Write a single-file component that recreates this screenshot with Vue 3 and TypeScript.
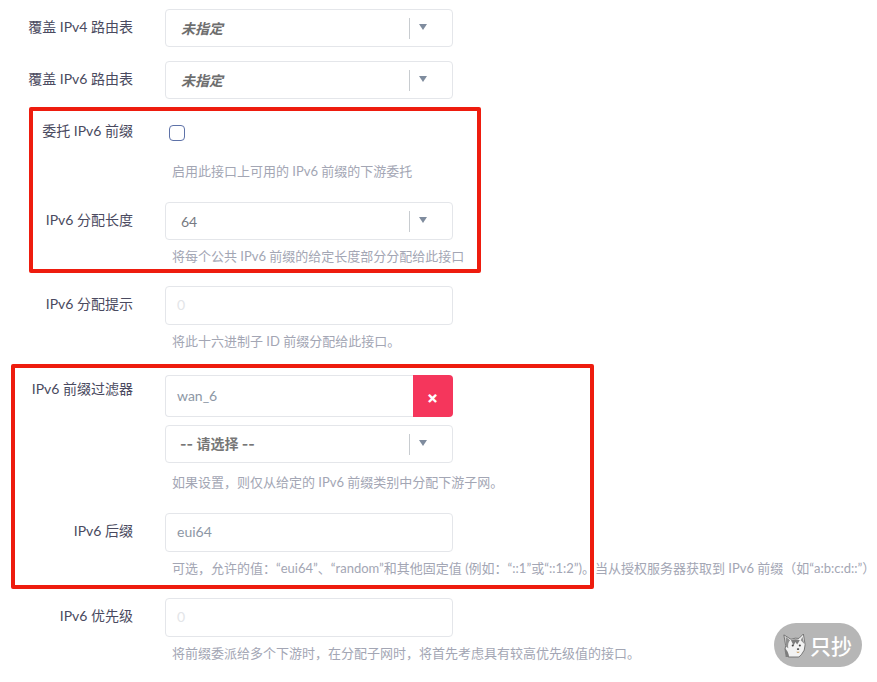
<script setup lang="ts">
const help = {
  delegate: '启用此接口上可用的 IPv6 前缀的下游委托',
  assign: '将每个公共 IPv6 前缀的给定长度部分分配给此接口',
}
</script>

<template>
  <div class="page">
    <div class="row gap14">
      <label class="label">覆盖 IPv4 路由表</label>
      <div class="control">
        <div class="select"><span class="val unset">未指定</span><span class="sep"></span><span class="tri"></span></div>
      </div>
    </div>
    <div class="row gap8">
      <label class="label">覆盖 IPv6 路由表</label>
      <div class="control">
        <div class="select"><span class="val unset">未指定</span><span class="sep"></span><span class="tri"></span></div>
      </div>
    </div>
    <div class="row gap21">
      <label class="label low">委托 IPv6 前缀</label>
      <div class="control">
        <span class="check"></span>
        <p class="help first">{{ help.delegate }}</p>
      </div>
    </div>
    <div class="row gap20">
      <label class="label">IPv6 分配长度</label>
      <div class="control">
        <div class="select"><span class="val">64</span><span class="sep"></span><span class="tri"></span></div>
        <p class="help">{{ help.assign }}</p>
      </div>
    </div>
    <div class="row gap24">
      <label class="label">IPv6 分配提示</label>
      <div class="control">
        <div class="input placeholder">0</div>
        <p class="help">将此十六进制子 ID 前缀分配给此接口。</p>
      </div>
    </div>
    <div class="row gap21">
      <label class="label high">IPv6 前缀过滤器</label>
      <div class="control">
        <div class="group">
          <div class="input tall">wan_6</div>
          <button class="remove" type="button">×</button>
        </div>
        <div class="select sel2"><span class="val pick">-- 请选择 --</span><span class="sep"></span><span class="tri"></span></div>
        <p class="help wide">如果设置，则仅从给定的 IPv6 前缀类别中分配下游子网。</p>
      </div>
    </div>
    <div class="row gap20">
      <label class="label">IPv6 后缀</label>
      <div class="control">
        <div class="input">eui64</div>
        <p class="help">可选，允许的值：“eui64”、“random”和其他固定值 (例如：“::1”或“::1:2”)。当从授权服务器获取到 IPv6 前缀（如“a:b:c:d::”）</p>
      </div>
    </div>
    <div class="row">
      <label class="label">IPv6 优先级</label>
      <div class="control">
        <div class="input placeholder">0</div>
        <p class="help">将前缀委派给多个下游时，在分配子网时，将首先考虑具有较高优先级值的接口。</p>
      </div>
    </div>

    <div class="mark mark-a"></div>
    <div class="mark mark-b"></div>

    <div class="badge">
      <svg class="dog" width="23" height="25" viewBox="0 0 26 28" aria-hidden="true">
        <path d="M1 2 L9 7 Q14 5 18 6 L23 1 L25 13 Q25 20 21 24 L18 27 L6 27 Q1 22 3 14 Z" fill="#f2f2f2" stroke="#6a6a6a" stroke-width="1"/>
        <path d="M3 4 L8 8 Q5 11 6 17 L3 15 Z" fill="#909090"/>
        <path d="M22 4 L24 12 L20 8 Z" fill="#909090"/>
        <path d="M9 8 Q14 6 19 8 L16 13 L14 10 L12 14 Z" fill="#7d7d7d"/>
        <path d="M2 17 Q6 20 7 27 L3 27 Z" fill="#7d7d7d"/>
        <circle cx="11" cy="14" r="1.2" fill="#444"/>
        <circle cx="19" cy="14" r="1.2" fill="#444"/>
        <ellipse cx="17" cy="18" rx="1.4" ry="1" fill="#444"/>
        <path d="M15 21 Q17 24 19 21 Z" fill="#c9a26a"/>
      </svg>
      <span>只抄</span>
    </div>
  </div>
</template>

<style>
html, body { margin: 0; background: #fff; }
</style>

<style scoped>
.page {
  position: relative;
  width: 877px;
  height: 682px;
  overflow: hidden;
  box-sizing: border-box;
  padding-top: 9px;
  font-family: Lato, "Noto Sans CJK SC", sans-serif;
  font-size: 14px;
  color: #4a4a60;
}
.row { display: flex; gap: 32px; }
.gap14 { margin-bottom: 14px; }
.gap8 { margin-bottom: 8px; }
.gap20 { margin-bottom: 20px; }
.gap21 { margin-bottom: 21px; }
.gap24 { margin-bottom: 24px; }
.label {
  flex: none;
  width: 133px;
  text-align: right;
  line-height: 20px;
  padding-top: 8px;
}
.low { padding-top: 14px; }
.high { padding-top: 4px; }
.control { width: 288px; flex: none; }
.select, .input {
  box-sizing: border-box;
  width: 288px;
  border: 1px solid #e4e6ea;
  border-radius: 4px;
  background: #fff;
}
.select {
  height: 38px;
  display: flex;
  align-items: center;
  padding-left: 15px;
}
.val { flex: 1; color: #777a82; font-size: 14px; }
.unset { font-style: italic; font-weight: 700; color: #6e6e6e; }
.pick { font-family: Inter, "Noto Sans CJK SC", sans-serif; font-weight: 700; color: #777; margin-top: -2px; margin-left: -1px; }
.sep { width: 1px; height: 21px; background: #c8ccd0; }
.tri {
  width: 0;
  height: 0;
  margin: -2px 25px 0 9px;
  border-left: 4px solid transparent;
  border-right: 4px solid transparent;
  border-top: 6px solid #7f8c9e;
}
.sel2 { margin-top: 8px; }
.input {
  height: 39px;
  line-height: 36px;
  padding-left: 11px;
  color: #8d97a5;
  font-size: 14px;
}
.placeholder { color: #e3e5e8; }
.group { display: flex; height: 42px; }
.tall {
  height: 42px;
  line-height: 39px;
  flex: 1;
  width: auto;
  border-right: 0;
  border-radius: 4px 0 0 4px;
}
.remove {
  width: 40px;
  height: 42px;
  border: 0;
  padding: 5px 1px 0 0;
  border-radius: 0 4px 4px 0;
  background: #f5365c;
  color: #fff;
  font: 700 17px/1 Inter, sans-serif;
}
.help {
  margin: 6px 0 0 7px;
  width: 720px;
  white-space: nowrap;
  line-height: 20px;
  font-size: 13px;
  color: #a3a6b4;
}
.first { margin-top: 20px; }
.wide { margin-top: 9px; }
.check {
  display: block;
  box-sizing: border-box;
  width: 16px;
  height: 16px;
  margin: 18px 0 0 4px;
  border: 1px solid #5e72a8;
  border-radius: 4px;
}
.mark { position: absolute; box-sizing: border-box; border: 4px solid #ee1c0e; border-radius: 2px; }
.mark-a { left: 29px; top: 107px; width: 452px; height: 166px; }
.mark-b { left: 11px; top: 364px; width: 583px; height: 225px; }
.badge {
  position: absolute;
  left: 774px;
  top: 623px;
  width: 88px;
  height: 44px;
  border-radius: 22px;
  background: #b6b6b6;
  display: flex;
  align-items: center;
  padding-left: 9px;
  box-sizing: border-box;
  gap: 4px;
  color: #fff;
  font: 500 21px/1 "Noto Sans CJK SC", sans-serif;
}
.dog { flex: none; }
</style>
